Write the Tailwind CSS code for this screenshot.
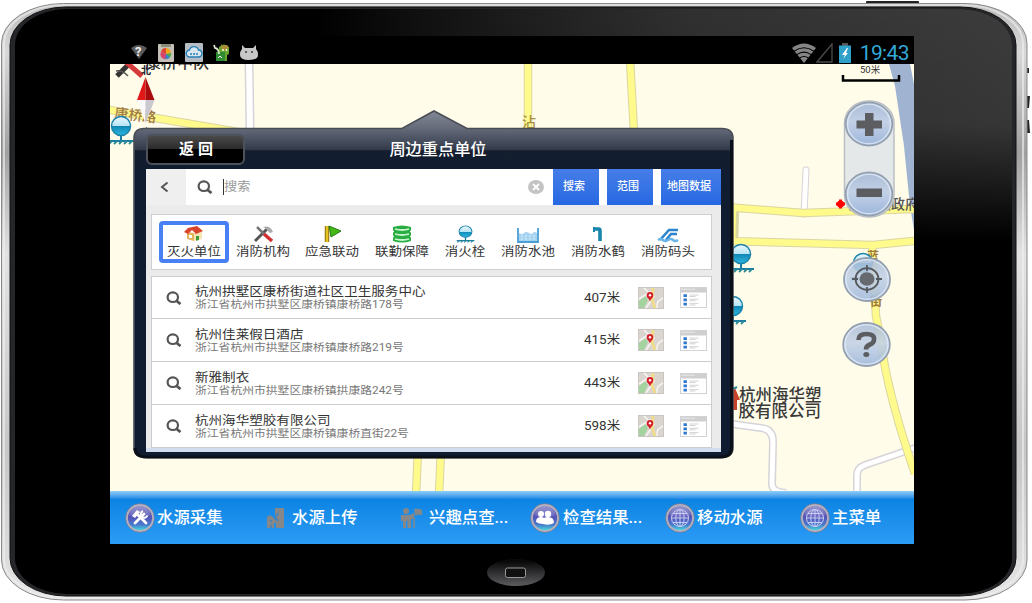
<!DOCTYPE html>
<html lang="zh-CN">
<head>
<meta charset="utf-8">
<title>周边重点单位</title>
<script src="https://cdn.jsdelivr.net/npm/@tailwindcss/browser@4"></script>
</head>
<body class="bg-white overflow-hidden font-[Roboto,'Noto_Sans_CJK_SC',sans-serif]">
<!-- shared icons -->
<svg width="0" height="0" class="absolute">
  <defs>
    <linearGradient id="glass" x1="0" y1="0" x2="0" y2="1"><stop offset="0" stop-color="#a9bbd6"/><stop offset=".45" stop-color="#c3d1e6"/><stop offset="1" stop-color="#9db6dc"/></linearGradient>
    <linearGradient id="orb" x1="0" y1="0" x2="0" y2="1"><stop offset="0" stop-color="#8d89c4"/><stop offset=".45" stop-color="#5553b8"/><stop offset=".75" stop-color="#4a78cc"/><stop offset="1" stop-color="#3fe8e0"/></linearGradient>
    <linearGradient id="water" x1="0" y1="0" x2="0" y2="1"><stop offset="0" stop-color="#eaf8fd"/><stop offset=".5" stop-color="#b6e4f4"/><stop offset=".51" stop-color="#0f86b4"/><stop offset="1" stop-color="#2fb9e2"/></linearGradient>
    <symbol id="search" viewBox="0 0 15 14"><ellipse cx="6.3" cy="6.2" rx="5.2" ry="4.8" fill="none" stroke="#555" stroke-width="2.200"/><path d="M9.500 9.500l4.500 3.500" stroke="#555" stroke-width="2.800"/></symbol>
    <symbol id="mapicon" viewBox="0 0 26 22"><rect x=".5" y=".5" width="25" height="21" fill="#dad5cf" stroke="#c9c6c2"/><path d="M1 14l6-5 3 4-4 8H1z" fill="#a5d3a0"/><path d="M1 12L12 5l4 4-8 12M6 1l8 8M19 21c-1-7 3-8 6-10" stroke="#f6f4f2" stroke-width="1.600" fill="none"/><path d="M15 1l-1 12 3 8" stroke="#f3dc86" stroke-width="2.600" fill="none"/><path d="M12 14.500C11 11 8.700 11 8.700 8.400a3.300 3.300 0 016.600 0C15.300 11 13 11 12 14.500z" fill="#d3222b"/><circle cx="12" cy="8.300" r="1.200" fill="#fff"/></symbol>
    <symbol id="listicon" viewBox="0 0 27 21"><rect x=".5" y=".5" width="26" height="20" fill="#fff" stroke="#cfd3d8"/><path d="M.5 1h26v4.500H.5z" fill="#cfcfcf"/><path d="M1 2.200h14" stroke="#e8e8e8"/><path d="M3.500 7.200h3.400v2.800H3.500zM3.500 11.500h3.400v2.800H3.500zM3.500 15.800h3.400v2.800H3.500z" fill="#2f78d0"/><path d="M9.500 8h9M9.500 9.500h6M9.500 12.300h9M9.500 13.800h6M9.500 16.600h9M9.500 18h6" stroke="#c6c6c6" stroke-width=".8"/></symbol>
    <symbol id="hydrant" viewBox="0 0 30 30"><path d="M14 20v5M1 26h26" stroke="#1a7da5" stroke-width="2"/><path d="M2 29l3-3M7 29l3-3M12 29l3-3M17 29l3-3M22 29l3-3" stroke="#2e8a95" stroke-width="1.800"/><circle cx="14" cy="11" r="9.500" fill="url(#water)" stroke="#1c83ab" stroke-width="1.500"/></symbol>
    <symbol id="orbring" viewBox="0 0 30 30"><circle cx="15" cy="15" r="13.200" fill="url(#orb)" stroke="#b4b2c0" stroke-width="2.200"/><circle cx="15" cy="15" r="14.400" fill="none" stroke="#77758b" stroke-width=".7"/><path d="M5 12a10 9 0 0120 0c-6 3-14 3-20 0z" fill="#fff" opacity=".14"/></symbol>
    <symbol id="globe" viewBox="0 0 30 30"><use href="#orbring"/><g fill="none" stroke="#c6ccf4" stroke-width="1"><circle cx="15" cy="15" r="8.500"/><ellipse cx="15" cy="15" rx="4.200" ry="8.500"/><path d="M15 6.500v17M6.500 15h17M8 10.500h14M8 19.500h14"/></g></symbol>
  </defs>
</svg>

<div class="relative w-[1032px] h-[603px]">
  <!-- tablet shell -->
  <svg class="absolute inset-0" width="1032" height="603" viewBox="0 0 1032 603">
    <defs>
      <linearGradient id="rim" x1="0" y1="0" x2="0" y2="1"><stop offset="0" stop-color="#b8b8b8"/><stop offset=".08" stop-color="#d8d8d8"/><stop offset=".25" stop-color="#a0a0a0"/><stop offset=".42" stop-color="#e2e2e2"/><stop offset=".75" stop-color="#c6c6c6"/><stop offset="1" stop-color="#e6e4e5"/></linearGradient>
      <linearGradient id="gx" x1="0" y1="0" x2="1" y2="0"><stop offset=".3" stop-color="#3c3c3c" stop-opacity="0"/><stop offset=".68" stop-color="#303030"/><stop offset="1" stop-color="#3c3c3c"/></linearGradient>
      <linearGradient id="gy" x1="0" y1="0" x2="0" y2="1"><stop offset="0" stop-color="#000" stop-opacity="0"/><stop offset=".5" stop-color="#000" stop-opacity=".1"/><stop offset="1" stop-color="#000"/></linearGradient>
      <linearGradient id="home" x1="0" y1="0" x2="0" y2="1"><stop offset=".1" stop-color="#0a0a0b"/><stop offset="1" stop-color="#5c5c60"/></linearGradient>
      <clipPath id="face"><rect x="15" y="9" width="997" height="585" rx="52" ry="36"/></clipPath>
    </defs>
    <rect x="866" y="1" width="53" height="4" rx="1" fill="#222"/>
    <path d="M1026 68h3v5h-3zM1026 96h4l-1 12h-3zM1026 120h3l1 13h-4z" fill="#222"/>
    <rect x="1.500" y="3.500" width="1025.500" height="596.500" rx="62" ry="40" fill="url(#rim)" stroke="#8a8a8a"/>
    <rect x="4" y="5" width="1019" height="593" rx="60" ry="39" fill="none" stroke="#efefef" stroke-width="2" opacity=".65"/>
    <rect x="10" y="7" width="1006" height="589" rx="56" ry="38" fill="#25262a" stroke="#111"/>
    <g clip-path="url(#face)"><path d="M15 9h997v585H15z" fill="#000"/><path d="M15 9h997v231H15z" fill="url(#gx)"/><path d="M15 9h997v231H15z" fill="url(#gy)"/></g>
    <ellipse cx="516" cy="572.500" rx="29" ry="13.500" fill="url(#home)"/>
    <rect x="505.500" y="568" width="20" height="9.500" rx="2" fill="#111" stroke="#9a9a9a"/>
  </svg>

  <div class="relative pt-9 pl-[110px]">
    <div class="w-[804px] h-[508px] flex flex-col overflow-hidden">
      <!-- status bar -->
      <header class="h-7 shrink-0 bg-black flex items-center justify-between pl-[20px] pr-[5px]">
        <div class="flex items-center gap-[9px] pt-[4px]">
          <svg width="18" height="18" viewBox="0 0 18 18"><path d="M1 5q8-6 16 0L9 16z" fill="#5a5a5a"/><text x="5" y="13" font-size="13" font-weight="700" fill="#eee">?</text></svg>
          <svg width="18" height="19" viewBox="0 0 18 19"><rect x="1" y="1" width="16" height="18" rx="1" fill="#c4c0b8"/><path d="M4 1h10v3H4z" fill="#888e78"/><path d="M9 11L4 9a5 5 0 015-4z" fill="#e04430"/><path d="M9 11V5a5 5 0 015 5z" fill="#f2a51e"/><path d="M9 11l5-1a5 5 0 01-4 6z" fill="#48aa4a"/><path d="M9 11l1 5a5 5 0 01-6-7z" fill="#d8436d"/><path d="M9 11l-1 5 5-1z" fill="#3b7ddc"/></svg>
          <svg class="ml-[1px]" width="18" height="19" viewBox="0 0 18 19"><rect width="18" height="19" rx="1" fill="#b5bcc3"/><path d="M5 14a3.500 3.500 0 01-.5-7 4.700 4.700 0 019 0 3.500 3.500 0 010 7z" fill="#d7e6f0" stroke="#2480b8" stroke-width="1.400"/><path d="M5 11h8" stroke="#2480b8" stroke-width="1.600" stroke-dasharray="2 1"/></svg>
          <svg class="ml-[1px]" width="18" height="19" viewBox="0 0 18 19"><path d="M6 4q5-5 10 0v7l-2 1v6H6z" fill="#6ca52e"/><path d="M8 1l2 2 4-1 2 3-4 2-3-1z" fill="#b08d35"/><circle cx="10" cy="7" r=".9" fill="#fff"/><circle cx="13.500" cy="7" r=".9" fill="#fff"/><path d="M3 9h9v9H3z" fill="#2e8b32"/><path d="M1 2l1 3 3 1M3 5q3 2 3 6" stroke="#d4e3c8" stroke-width="1.800" fill="none"/><path d="M5 15l2-2 2 2" stroke="#fff" fill="none"/></svg>
          <svg width="18" height="17" viewBox="0 0 18 17"><path d="M2 1l3 3h8l3-3v4q2 2 2 6 0 5-9 5T0 11q0-4 2-6z" fill="#c8c8c8"/><circle cx="6" cy="8" r="1.100" fill="#444"/><circle cx="12" cy="8" r="1.100" fill="#444"/></svg>
        </div>
        <div class="flex items-center pt-[5px]">
          <svg width="24" height="20" viewBox="0 0 24 20"><path d="M0 5Q12-4 24 5L12 20z" fill="#858585"/><path d="M2 8.200q10-7 20 0M4.800 11.600q7.200-5 14.400 0M7.600 15q4.400-3 8.800 0" fill="none" stroke="#000" stroke-width="1.100"/></svg>
          <svg width="17" height="20" viewBox="0 0 17 20"><path d="M1 19L16 1v18z" fill="none" stroke="#4b4b4b" stroke-width="1.300"/></svg>
          <svg class="ml-[6px]" width="12" height="20" viewBox="0 0 12 20"><path d="M3 0h6v3H3z" fill="#555"/><path d="M0 2.500h12V20H0z" fill="#2fa0c8"/><path d="M8 5l-5 7h3l-2 4 5-6H7l2-5z" fill="#fff"/></svg>
          <span class="ml-[9px] text-[21px] leading-5 text-[#33a9d8] tracking-[-0.6px]">19:43</span>
        </div>
      </header>

      <!-- map -->
      <main class="relative h-[427px] shrink-0 bg-[#fffce9] overflow-hidden">
        <svg class="absolute inset-0" width="804" height="427" viewBox="110 64 804 427">
          <path d="M889 64h21l4 20v146l-4-24-6-60-9-60z" fill="#a0b4d2"/>
          <g fill="none">
            <path d="M249 60l1 70" stroke="#d6d4d8" stroke-width="9"/><path d="M249 60l1 70" stroke="#fff" stroke-width="6"/>
            <path d="M806 170l-2 44" stroke="#d6d4d8" stroke-width="7" stroke-linecap="round"/><path d="M806 170l-2 44" stroke="#fff" stroke-width="5" stroke-linecap="round"/>
            <path d="M725 423l36 5q12 1 12 14l-1 42q0 8 14 9M857 495v-20q0-7 8-10l50-17" stroke="#d6d4d8" stroke-width="8"/><path d="M725 423l36 5q12 1 12 14l-1 42q0 8 14 9M857 495v-20q0-7 8-10l50-17" stroke="#fff" stroke-width="5"/>
            <g stroke="#dcd6a0" stroke-width="8.500"><path d="M104 109l34 6 100 17M528 60v72M630 60l4 72M418 450l-2 45M441 450l-2 45"/><path d="M725 207l78 6 111-4M725 241l76 2 72 2 41-4M872 246l4 70 5 26q6 50 34 132M735 206l-1 36"/></g>
            <g stroke="#fffa8c" stroke-width="6.500"><path d="M104 109l34 6 100 17M528 60v72M630 60l4 72M418 450l-2 45M441 450l-2 45"/><path d="M725 207l78 6 111-4M725 241l76 2 72 2 41-4M872 246l4 70 5 26q6 50 34 132M733 206l-1 36"/></g>
          </g>
          <g font-family="Noto Sans CJK SC, sans-serif" fill="#333">
            <text x="145" y="68" font-size="16" font-weight="500">康桥中队</text>
            <text x="114" y="118" font-size="14" font-weight="500" fill="#a07a45" transform="rotate(6 114 118)">康桥路</text>
            <text x="522" y="127" font-size="14" font-weight="500" fill="#a89040">沾</text>
            <text x="739" y="400.500" font-size="16.500" font-weight="500" fill="#3a3a3a">杭州海华塑</text>
            <text x="738.500" y="417" font-size="16.500" font-weight="500" fill="#3a3a3a">胶有限公司</text>
            <text x="849" y="209" font-size="14" font-weight="500" fill="#555">康桥镇政府</text>
            <text x="860" y="73" font-size="9.500" font-family="Roboto, Noto Sans CJK SC, sans-serif">50米</text>
            <g fill="#a07a35" font-size="12" font-weight="700"><text x="867" y="261">蓝</text><text x="870" y="306">街</text></g>
          </g>
          <path d="M843 75v5.500h56V75" fill="none" stroke="#000" stroke-width="2.500"/>
          <circle cx="840.500" cy="204" r="3.600" fill="#f00"/><path d="M840.500 199.500v9M836 204h9" stroke="#f00" stroke-width="3"/>
          <path d="M117 76l12-12" stroke="#333" stroke-width="5"/><path d="M126 62l16 14" stroke="#d63b3b" stroke-width="5"/><path d="M116 71q6-1 12 5" stroke="#555" stroke-width="1.500" fill="none"/>
          <text x="141" y="74" font-size="10" font-weight="700" fill="#223" font-family="Noto Sans CJK SC, sans-serif">北</text>
          <path d="M145.500 77l-8.500 23h8.500z" fill="#e01818"/><path d="M145.500 77l9 23h-9z" fill="#a80c0c"/><path d="M137 100h8.500v24z" fill="#fafafa"/><path d="M154.500 100h-9v24z" fill="#c9c9cf"/>
          <text x="142" y="135" font-size="9" fill="#333" font-family="Noto Sans CJK SC, sans-serif">南</text>
          <use href="#hydrant" x="107" y="115" width="30" height="30"/>
          <use href="#hydrant" x="727" y="243" width="30" height="30"/>
          <use href="#hydrant" x="719" y="295" width="30" height="30"/>
          <use href="#hydrant" x="849" y="252" width="30" height="30"/>
          <path d="M728 397l7-9 5 12h-3v10h-7z" fill="#c5442b"/><path d="M731 390l6-3" stroke="#2e8a95" stroke-width="2"/>
        </svg>

        <!-- floating map controls -->
        <svg class="absolute left-[728px] top-[34px]" width="60" height="275" viewBox="838 98 60 275">
          <rect x="844.500" y="101" width="49.500" height="116" rx="24" ry="22" fill="#e3e6e8" fill-opacity=".92" stroke="#b9bfc4" stroke-width="1.500"/>
          <g fill="url(#glass)" stroke="#93a0b0" stroke-width="1.800">
            <ellipse cx="869" cy="124" rx="23.300" ry="21.500"/><ellipse cx="869" cy="194" rx="23.300" ry="21.500"/>
            <ellipse cx="867" cy="279.500" rx="23" ry="21.500" fill-opacity=".88"/><ellipse cx="866.500" cy="344.500" rx="23.300" ry="21.500" fill-opacity=".88"/>
          </g>
          <g fill="none" stroke="#e6eefa" stroke-opacity=".7" stroke-width="1.500"><ellipse cx="869" cy="124" rx="21.500" ry="19.700"/><ellipse cx="869" cy="194" rx="21.500" ry="19.700"/><ellipse cx="867" cy="279.500" rx="21.200" ry="19.700"/><ellipse cx="866.500" cy="344.500" rx="21.500" ry="19.700"/></g>
          <path d="M865 113h8.500v7.500H882v8h-8.500v7.500H865v-7.500h-8.500v-8h8.500zM856.500 188.500H882v8.500h-25.500z" fill="#5b5d60"/>
          <ellipse cx="867" cy="279" rx="11.500" ry="10.800" fill="none" stroke="#55585c" stroke-width="1.800"/><ellipse cx="867" cy="279" rx="7.500" ry="6.800" fill="#66696d"/><path d="M867 265v6M867 287v6M852 279h6M876 279h6" stroke="#55585c" stroke-width="1.800"/>
          <path d="M858.500 340q0-6 8-6t7.500 5.500q0 3.500-4 5t-4 5" fill="none" stroke="#5b5d60" stroke-width="4.600"/><ellipse cx="866.300" cy="354.500" rx="3" ry="2.500" fill="#5b5d60"/>
        </svg>

        <!-- popup -->
        <section class="absolute left-[22px] top-[44px] w-[604px] h-[354px]">
          <svg class="absolute inset-0" width="604" height="354" viewBox="132 108 604 354">
            <defs><linearGradient id="hd" gradientUnits="userSpaceOnUse" x1="0" y1="110" x2="0" y2="170"><stop offset="0" stop-color="#858a98"/><stop offset=".3" stop-color="#666b7a"/><stop offset=".66" stop-color="#323a4a"/><stop offset=".68" stop-color="#141e2f"/><stop offset="1" stop-color="#101c2f"/></linearGradient></defs>
            <path d="M144 128.500h258l32-17.500L467 128.500h255q11 0 11 10v309q0 10-12 10H146q-12 0-12-10V138.500q0-10 10-10z" fill="url(#hd)" stroke="#4a4d55" stroke-width="1.600"/>
            <path d="M731.500 140v308q0 9-11 9H147q-12 0-12-9" fill="none" stroke="#0a0f18" stroke-width="3"/>
          </svg>
          <div class="relative h-full flex flex-col pt-[24px] pl-[14px] pr-[15px]">
            <div class="relative h-[37px] shrink-0 flex items-start">
              <button class="mt-[2px] w-[99px] h-[31px] rounded-[6px] border-2 border-[#4c515b] bg-linear-to-b from-[#4a4a4a] from-0% via-[#2b2b2b] via-48% to-black to-50% text-white font-bold text-[15px] leading-[27px] tracking-[4px] pl-[5px]">返回</button>
              <h1 class="absolute left-0 w-full pl-[9px] text-center text-white text-[16.2px] font-medium leading-[36px]">周边重点单位</h1>
            </div>
            <div class="w-[575px] h-[283px] bg-[#ebebeb] flex flex-col">
              <div class="h-9 shrink-0 bg-white flex items-center">
                <div class="w-10 h-full bg-[#efefef] flex items-center justify-center"><svg class="mr-[3px]" width="9" height="12" viewBox="0 0 9 12"><path d="M7.500 1.500L2 6l5.500 4.500" fill="none" stroke="#555" stroke-width="2"/></svg></div>
                <svg class="ml-[11px]" width="16" height="14"><use href="#search"/></svg>
                <span class="ml-[10px] h-4 w-px bg-[#333]"></span>
                <span class="w-[304px] text-[12px] leading-4 text-[#999]"><span class="inline-block scale-x-110 origin-left">搜索</span></span>
                <svg width="16" height="14" viewBox="0 0 16 14"><ellipse cx="8" cy="7" rx="8" ry="7" fill="#c3c3c3"/><path d="M5 4l6 6M11 4l-6 6" stroke="#fff" stroke-width="1.800"/></svg>
                <div class="ml-auto h-full flex gap-2 text-white text-[11px] font-medium">
                  <button class="w-[46px] bg-linear-to-b from-[#467ee8] to-[#2668e2] pr-1">搜索</button>
                  <button class="w-[46px] bg-linear-to-b from-[#467ee8] to-[#2668e2] pr-1">范围</button>
                  <button class="w-[60px] bg-linear-to-b from-[#467ee8] to-[#2668e2] whitespace-nowrap pr-1">地图数据</button>
                </div>
              </div>
              <!-- categories -->
              <nav class="mt-[9px] ml-[5px] w-[561px] h-[56px] shrink-0 bg-white border border-[#cfcfcf] flex pl-[7px] pt-[6px] text-[12px] leading-[15px] text-[#333]">
                <div class="w-[70px] h-[42px] rounded-[4px] border-4 border-[#4a80f5] flex flex-col items-center">
                  <svg class="mt-[1px] shrink-0" width="20" height="15" viewBox="0 0 20 15"><path d="M3 6v7l7 2V7z" fill="#e3b35e"/><path d="M10 7l8-2v8l-8 2z" fill="#f5e5b4"/><path d="M0 6l4-4 9-2 6 5-7 3-4-4-4 4z" fill="#d9442c"/><path d="M12 10h3v4l-3 .7z" fill="#3f9a38"/><path d="M5 9h3v3H5z" fill="#fff"/></svg>
                  <span class="mt-[4px] whitespace-nowrap scale-x-112">灭火单位</span>
                </div>
                <div class="w-[69px] pt-[4px] flex flex-col items-center"><svg width="22" height="18" viewBox="0 0 22 18"><path d="M2 16L14 4" stroke="#555" stroke-width="3"/><path d="M10 2q7-2 10 5l-3 1-5-5z" fill="#aaa"/><path d="M4 2l7 7" stroke="#777" stroke-width="2.500"/><path d="M11 9l8 7" stroke="#d03030" stroke-width="3.500"/></svg><span class="mt-[2px] whitespace-nowrap scale-x-112">消防机构</span></div>
                <div class="w-[69px] pt-[4px] flex flex-col items-center"><svg width="20" height="18" viewBox="0 0 20 18"><path d="M4 1v16" stroke="#8c7214" stroke-width="4.500"/><path d="M4 1v16" stroke="#e6c31f" stroke-width="2.500"/><path d="M6 1l12 5-10 6z" fill="#45b816" stroke="#277a12"/></svg><span class="mt-[2px] whitespace-nowrap scale-x-112">应急联动</span></div>
                <div class="w-[70px] pt-[4px] flex flex-col items-center"><svg width="20" height="18" viewBox="0 0 20 18"><path d="M1 2q9-3 18 0v14q-9 3-18 0z" fill="#28ae43"/><path d="M3 4q7 2 14 0M3 9q7 2 14 0M3 14q7 2 14 0" stroke="#c9f3ce" stroke-width="1.800" fill="none"/><path d="M0 6.500h2M18 6.500h2M0 11.500h2M18 11.500h2" stroke="#fff" stroke-width="1.500"/></svg><span class="mt-[2px] whitespace-nowrap scale-x-112">联勤保障</span></div>
                <div class="w-[56px] pt-[4px] flex flex-col items-center"><svg width="19" height="18" viewBox="0 0 28 30" preserveAspectRatio="none"><use href="#hydrant" width="30" height="30"/></svg><span class="mt-[2px] whitespace-nowrap scale-x-112">消火栓</span></div>
                <div class="w-[70px] pt-[4px] flex flex-col items-center"><svg width="22" height="18" viewBox="0 0 22 18"><path d="M2 8q3 2 5 0t5 0 4 0 4 0v8H2z" fill="#a6d3f0"/><path d="M1 3v14h20V3" fill="none" stroke="#4a9fd4" stroke-width="1.800"/><path d="M4 11h14M4 14h14" stroke="#d8edfa" stroke-dasharray="2 2"/></svg><span class="mt-[2px] whitespace-nowrap scale-x-112">消防水池</span></div>
                <div class="w-[70px] pt-[4px] flex flex-col items-center"><svg width="12" height="18" viewBox="0 0 12 18"><path d="M2 4h5q1 0 1 2v10" fill="none" stroke="#1686aa" stroke-width="3.600"/><path d="M2 2v5" stroke="#1686aa" stroke-width="2"/></svg><span class="mt-[2px] whitespace-nowrap scale-x-112">消防水鹤</span></div>
                <div class="w-[70px] pt-[4px] flex flex-col items-center"><svg width="22" height="18" viewBox="0 0 22 18"><path d="M21 5h-9L3 15M20 9h-6l-5 6" fill="none" stroke="#2b84cc" stroke-width="2.600"/><path d="M1 15q3-2 5 0t5 0 5 0 5 0" fill="none" stroke="#66b5e8" stroke-width="2.500"/></svg><span class="mt-[2px] whitespace-nowrap scale-x-112">消防码头</span></div>
              </nav>
              <!-- results -->
              <ul class="mt-[6px] ml-[5px] w-[561px] flex flex-col text-[#333]">
                <li class="h-[43px] bg-white border border-[#cdcdcd] flex items-center">
                  <svg class="ml-[14px] shrink-0" width="16" height="14"><use href="#search"/></svg>
                  <div class="ml-[13px] w-[389px] whitespace-nowrap"><p class="w-max text-[12px] leading-[14px] scale-x-113 origin-left">杭州拱墅区康桥街道社区卫生服务中心</p><p class="w-max text-[10px] leading-[11px] text-[#777] scale-x-118 origin-left">浙江省杭州市拱墅区康桥镇康桥路178号</p></div>
                  <span class="w-[54px] text-[12px] scale-x-112 origin-left whitespace-nowrap">407米</span>
                  <svg width="26" height="22"><use href="#mapicon"/></svg><svg class="ml-[16px]" width="27" height="21"><use href="#listicon"/></svg>
                </li>
                <li class="h-[43px] bg-white border border-t-0 border-[#cdcdcd] flex items-center">
                  <svg class="ml-[14px] shrink-0" width="16" height="14"><use href="#search"/></svg>
                  <div class="ml-[13px] w-[389px] whitespace-nowrap"><p class="w-max text-[12px] leading-[14px] scale-x-113 origin-left">杭州佳莱假日酒店</p><p class="w-max text-[10px] leading-[11px] text-[#777] scale-x-118 origin-left">浙江省杭州市拱墅区康桥镇康桥路219号</p></div>
                  <span class="w-[54px] text-[12px] scale-x-112 origin-left whitespace-nowrap">415米</span>
                  <svg width="26" height="22"><use href="#mapicon"/></svg><svg class="ml-[16px]" width="27" height="21"><use href="#listicon"/></svg>
                </li>
                <li class="h-[43px] bg-white border border-t-0 border-[#cdcdcd] flex items-center">
                  <svg class="ml-[14px] shrink-0" width="16" height="14"><use href="#search"/></svg>
                  <div class="ml-[13px] w-[389px] whitespace-nowrap"><p class="w-max text-[12px] leading-[14px] scale-x-113 origin-left">新雅制衣</p><p class="w-max text-[10px] leading-[11px] text-[#777] scale-x-118 origin-left">浙江省杭州市拱墅区康桥镇拱康路242号</p></div>
                  <span class="w-[54px] text-[12px] scale-x-112 origin-left whitespace-nowrap">443米</span>
                  <svg width="26" height="22"><use href="#mapicon"/></svg><svg class="ml-[16px]" width="27" height="21"><use href="#listicon"/></svg>
                </li>
                <li class="h-[43px] bg-white border border-t-0 border-[#cdcdcd] flex items-center">
                  <svg class="ml-[14px] shrink-0" width="16" height="14"><use href="#search"/></svg>
                  <div class="ml-[13px] w-[389px] whitespace-nowrap"><p class="w-max text-[12px] leading-[14px] scale-x-113 origin-left">杭州海华塑胶有限公司</p><p class="w-max text-[10px] leading-[11px] text-[#777] scale-x-118 origin-left">浙江省杭州市拱墅区康桥镇康桥直街22号</p></div>
                  <span class="w-[54px] text-[12px] scale-x-112 origin-left whitespace-nowrap">598米</span>
                  <svg width="26" height="22"><use href="#mapicon"/></svg><svg class="ml-[16px]" width="27" height="21"><use href="#listicon"/></svg>
                </li>
              </ul>
              <div class="mt-auto h-[4px] bg-[#d3dced]"></div>
            </div>
          </div>
        </section>
      </main>

      <!-- bottom tabs -->
      <footer class="h-[53px] shrink-0 flex pl-[15px] pt-[1px] text-white text-[16.4px] font-medium items-center bg-linear-to-b from-[#8fcff8] from-0% via-[#0b84e3] via-16% to-[#2b9cf6] to-100%">
        <div class="w-[135px] shrink-0 flex items-center gap-[2px] whitespace-nowrap"><svg width="30" height="30" viewBox="0 0 30 30"><use href="#orbring"/><path d="M10 20l9-9M12 11l9 9" stroke="#fff" stroke-width="2.800" stroke-linecap="round"/><path d="M7 13l5-6 3 2-5 6z" fill="#fff"/><path d="M18 8a3.500 3.500 0 104.500 4.500" stroke="#fff" stroke-width="2" fill="none"/></svg>水源采集</div>
        <div class="w-[135px] shrink-0 flex items-center gap-[7px] pl-[6px] whitespace-nowrap"><svg width="19" height="22" viewBox="0 0 19 22"><path d="M9 1h9v20h-8v-5H8v5H1V10l3-2 3 2 2 3z" fill="#858789"/><path d="M5 13v2M5 18v3M12 6l-3 5 3 3" stroke="#2a84cf" stroke-width="1.200" fill="none"/></svg>水源上传</div>
        <div class="w-[135px] shrink-0 flex items-center gap-[6px] pl-[5px] whitespace-nowrap"><svg width="23" height="22" viewBox="0 0 23 22"><circle cx="6" cy="4" r="3" fill="#858789"/><path d="M1 8h9l4-2v4l-3 3v8H7.500v-7H6v7H3v-7H1z" fill="#858789"/><path d="M14 2q4-1 8 1v5q-4-1-7 1z" fill="#858789"/><path d="M14 10v11" stroke="#858789" stroke-width="1.500"/></svg>兴趣点查...</div>
        <div class="w-[135px] shrink-0 flex items-center gap-[3px] whitespace-nowrap"><svg width="30" height="30" viewBox="0 0 30 30"><use href="#orbring"/><circle cx="11" cy="11" r="3" fill="#fff"/><circle cx="18" cy="11" r="3.200" fill="#fff"/><path d="M6 19q0-5 5-5 2 0 3 1 1-1 4-1 6 0 6 6-5 3-11 1-4 0-7-2z" fill="#fff"/></svg>检查结果...</div>
        <div class="w-[135px] shrink-0 flex items-center gap-[2px] whitespace-nowrap"><svg width="30" height="30"><use href="#globe"/></svg>移动水源</div>
        <div class="flex items-center gap-[2px] whitespace-nowrap"><svg width="30" height="30"><use href="#globe"/></svg>主菜单</div>
      </footer>
    </div>
  </div>
</div>
</body>
</html>
